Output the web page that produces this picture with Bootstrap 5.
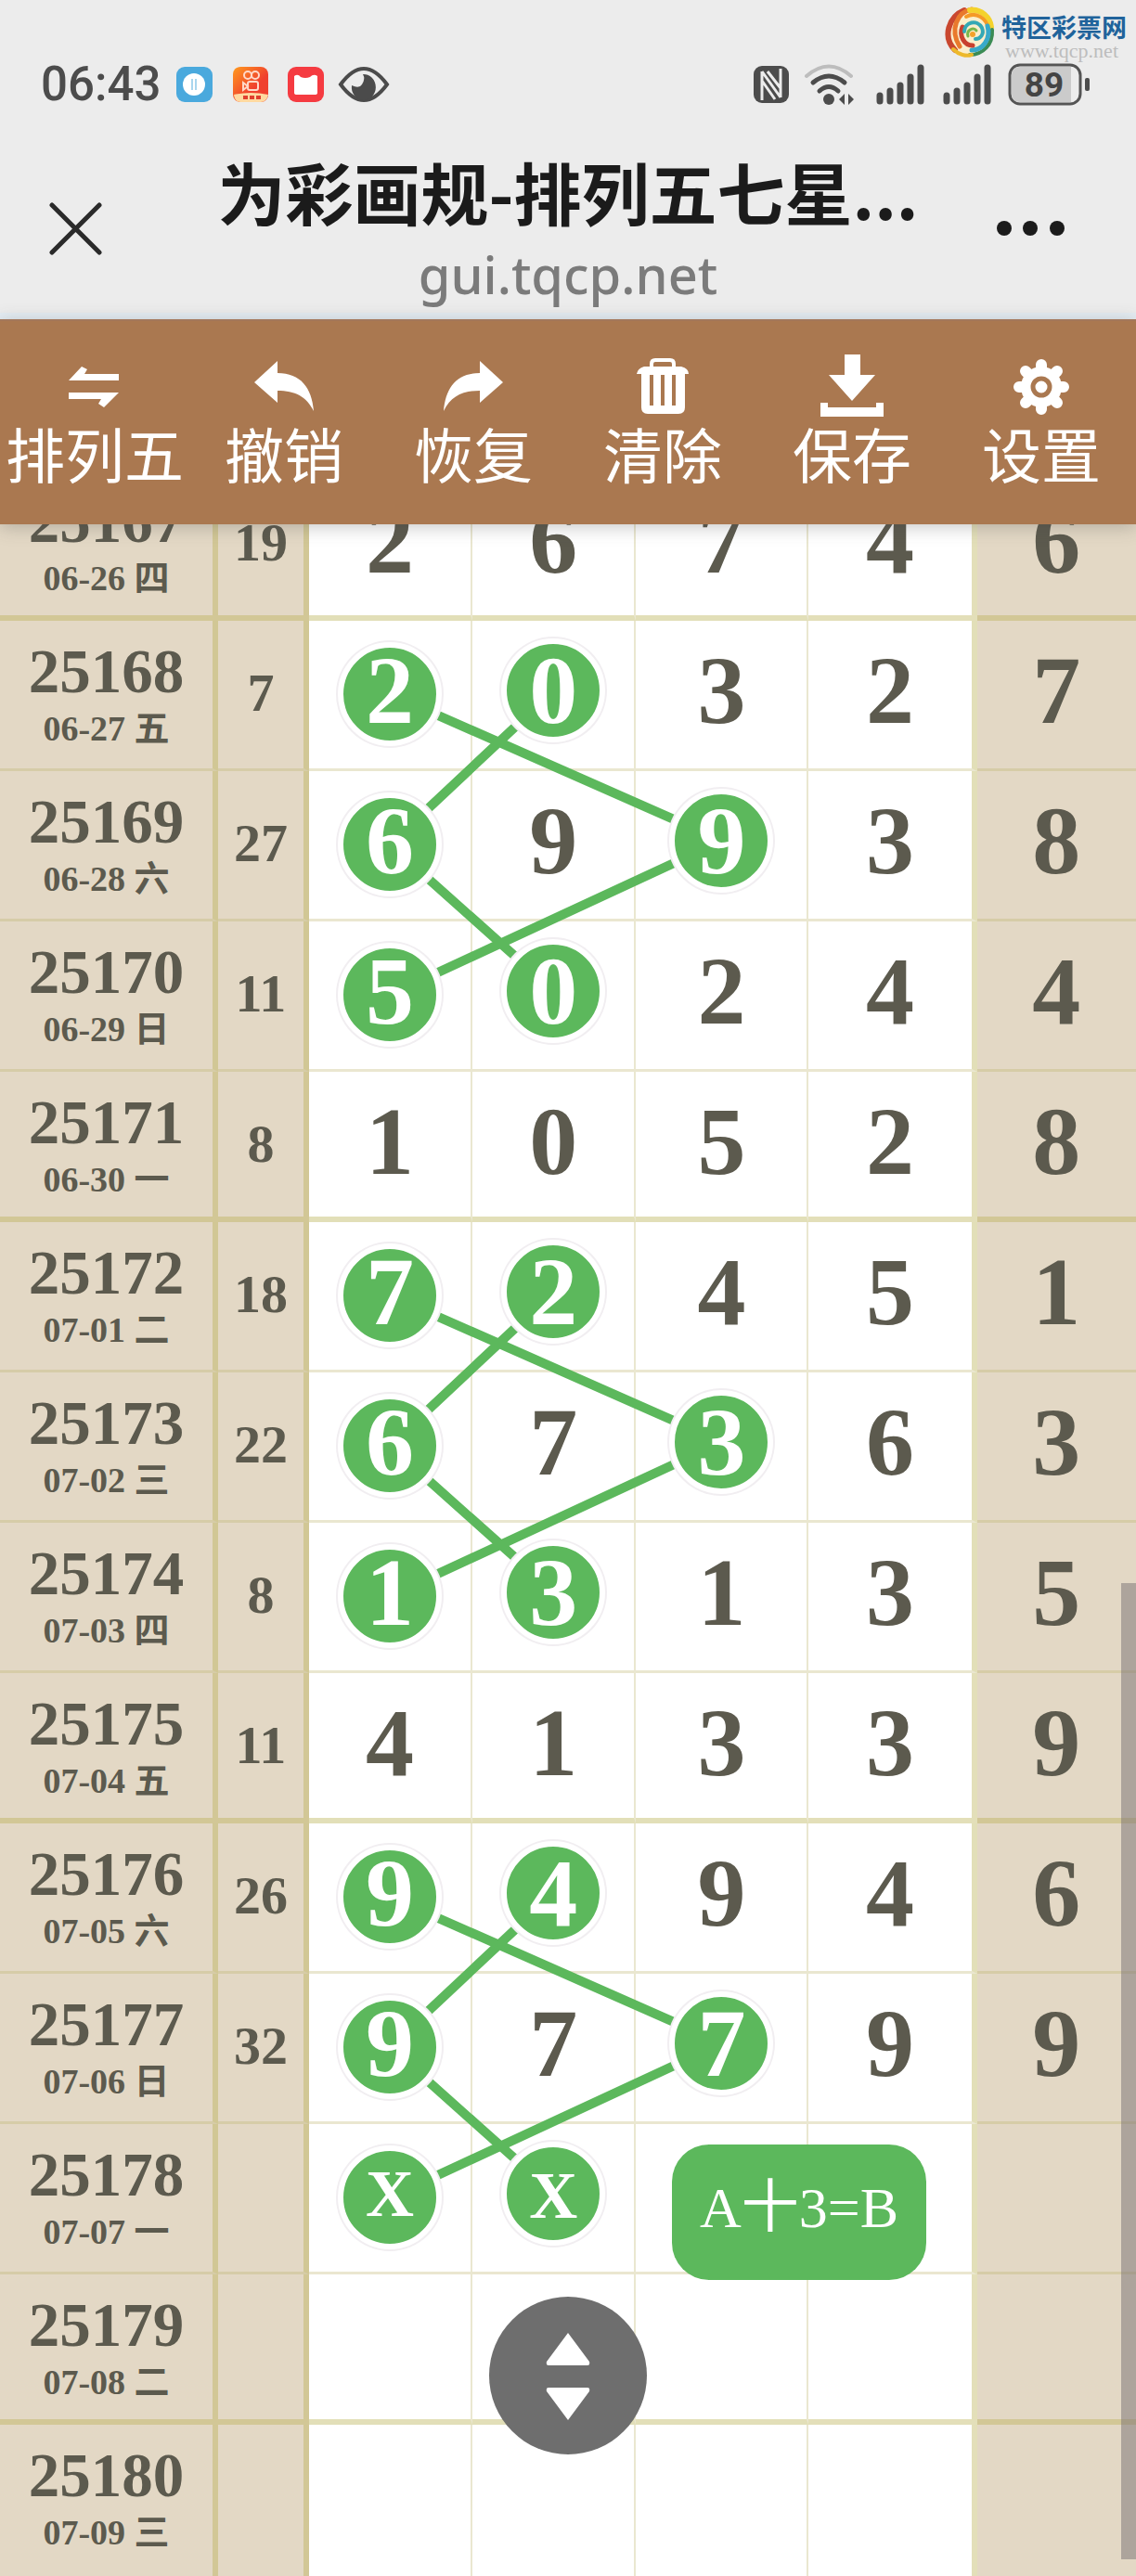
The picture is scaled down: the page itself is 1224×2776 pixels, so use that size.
<!DOCTYPE html>
<html lang="zh-CN">
<head>
<meta charset="utf-8">
<meta name="viewport" content="width=device-width, initial-scale=1">
<title>为彩画规-排列五七星</title>
<link href="https://cdn.jsdelivr.net/npm/bootstrap@5.3.0/dist/css/bootstrap.min.css" rel="stylesheet">
<style>
:root{--ink:#5c5a4e;--sand:#e3d8c5;--rule:rgba(184,176,80,.4);--rule-thin:rgba(184,176,100,.3);--leaf:#5cb85c}
body{background:var(--sand);font-family:"Noto Sans","Noto Sans CJK SC",sans-serif;color:var(--ink);overflow-x:hidden}
svg{display:block;flex:none}
.top-shell{background:#ececec;border-bottom:7px solid #e5edf3}
.status-line{padding:63px 50px 44px 44px;color:#4c4c4c}
.status-group{height:56px}
.clock{font:500 51px/56px Roboto,sans-serif}
.brand-mark{top:6px;right:10px;gap:6px}
.brand-name{font:bold 27px/30px "Noto Sans CJK SC",sans-serif;color:#20639b}
.brand-url{font:22px/22px "Liberation Serif",serif;color:#bdbdbd;padding-left:4px}
.title-line{padding:0 46px}
.page-title{font:bold 73px/84px "Noto Sans CJK SC",sans-serif;color:#1b1b1b;margin:0 0 6px}
.page-host{font:500 56px/84px "Noto Sans",sans-serif;color:#7b7b7b}
.plain-btn{background:none;border:0;padding:0;color:#1b1b1b}
.tools{background:#aa7850;height:221px;z-index:5;box-shadow:0 3px 18px rgba(70,70,70,.3);border-top:2px solid #a3775a}
.tools button{background:none;border:0;padding:30px 0 0;color:#fff;font:64px/62px "Noto Sans CJK SC",sans-serif;flex:1 1 0;min-width:0;white-space:nowrap}
.chart{margin-top:-58px}
.chart-table{table-layout:fixed;border-collapse:separate;border-spacing:0;font-family:"Liberation Serif","Noto Sans CJK SC",serif;font-weight:bold}
.chart-table>tbody>tr>*{height:162px;padding:0;text-align:center;vertical-align:top;color:var(--ink);background:#fff;border:0 solid var(--rule-thin);border-width:0 2px 3px 0;font-size:104px;line-height:150px}
.chart-table>tbody>tr>th{background:var(--sand);border-right:6px solid var(--rule);padding-top:24px;font-size:67px;line-height:60px}
.chart-table>tbody>tr>th small{display:block;font-size:38px;line-height:64px;font-weight:bold}
.chart-table>tbody>tr>td:nth-child(2){background:var(--sand);border-right:6px solid var(--rule);font-size:58px;line-height:156px}
.chart-table>tbody>tr>td:nth-child(6){border-right:6px solid var(--rule)}
.chart-table>tbody>tr>td:nth-child(7){background:var(--sand);border-right:0}
.chart-table>tbody>tr.block-end>*{border-bottom:6px solid var(--rule)}
.chart-table>tbody>tr:last-child>*{border-bottom:0;height:163px}
.ball{display:block;position:relative;z-index:2;width:112px;height:112px;margin:19px auto 0;border:6px solid #fff;border-radius:50%;background:var(--leaf);box-shadow:0 0 0 2px #f1eef1;color:#fff;line-height:100px}
td:nth-child(3) .ball{margin-top:23px;line-height:92px}
.chart-table .ball-x{font-size:72px;line-height:104px}
.links{inset:0;z-index:1;pointer-events:none}
.formula{left:59.15%;top:1804px;z-index:3;background:var(--leaf);color:#fff;border-radius:40px;padding:28px 30px 38px;font:62px/80px "Liberation Serif","Noto Sans CJK SC",serif}
.jump{left:50%;top:1968px;z-index:3;transform:translateX(-50%)}
.thumb{right:0;top:1199px;width:16px;height:1052px;background:rgba(120,112,116,.5);z-index:4}
</style>
<script src="https://cdn.jsdelivr.net/npm/bootstrap@5.3.0/dist/js/bootstrap.bundle.min.js"></script>
</head>
<body>
<header class="top-shell position-relative">
  <a href="#" class="brand-mark position-absolute d-flex text-decoration-none">
    <svg width="56" height="58" viewBox="0 0 56 58" fill="none" stroke-linecap="round">
      <circle cx="28" cy="29" r="25" fill="#fbeecb"/>
      <path d="M22 5C5 12-2 34 12 48" stroke="#c9472f" stroke-width="6"/>
      <path d="M30 4C14 7 6 26 17 44" stroke="#e9792c" stroke-width="5"/>
      <path d="M28 5c12-2 22 8 23 18" stroke="#f4d22c" stroke-width="6"/>
      <path d="M24 12c11-6 22 2 24 13" stroke="#f59a26" stroke-width="4"/>
      <path d="M52 26c1 16-10 27-24 27" stroke="#3b8b54" stroke-width="4"/>
      <path d="M47 22c4 14-5 26-17 26" stroke="#38a9c9" stroke-width="5"/>
      <path d="M10 47c6 6 14 8 20 6" stroke="#edb92b" stroke-width="4"/>
      <path d="M20 23c-4 10 2 20 11 20" stroke="#c8402f" stroke-width="5"/>
      <path d="M22 28c0-10 14-14 19-4 3 7-2 12-7 12" stroke="#34a8b5" stroke-width="4"/>
      <path d="M26 33c-2-7 6-10 9-6" stroke="#78b64a" stroke-width="3"/>
      <circle cx="31" cy="31" r="3" fill="#f3a12a"/>
    </svg>
    <span class="d-block pt-2"><span class="brand-name d-block">特区彩票网</span><span class="brand-url d-block">www.tqcp.net</span></span>
  </a>
  <div class="status-line d-flex justify-content-between">
    <div class="status-group d-flex align-items-center">
      <span class="clock me-3">06:43</span>
      <svg width="240" height="40" viewBox="0 0 240 40">
        <rect x="1" y="1" width="39" height="38" rx="9" fill="#4aa9dd"/><ellipse cx="20" cy="20" rx="12" ry="12" fill="#fff"/><path d="M18 14v12M22 14v12" stroke="#a9d6ee" stroke-width="2"/>
        <defs><linearGradient id="sun" x1="0" y1="0" x2="1" y2="1"><stop offset="0" stop-color="#ff9a1e"/><stop offset=".6" stop-color="#f0402e"/></linearGradient></defs>
        <rect x="62" y="1" width="38" height="38" rx="8" fill="url(#sun)"/><g fill="none" stroke="#ffd9c8" stroke-width="2"><circle cx="78" cy="10" r="4"/><circle cx="86" cy="10" r="4"/><rect x="78" y="17" width="11" height="9" rx="2"/><path d="M73 18v8l5-4z"/></g><path d="M63 31q18-4 37 0-2 8-8 8H70q-6 0-7-8" fill="#ffd9a0"/><path d="M73 34h20" stroke="#e0402f" stroke-width="4" stroke-dasharray="5 2"/>
        <rect x="121" y="1" width="39" height="38" rx="9" fill="#f53b41"/><path d="M128 11q4-3 7 1 5 2 10 0 4-4 8-1v18q0 2-3 2h-19q-3 0-3-2z" fill="#fff"/>
        <path d="M178 20Q203-14 228 20 203 54 178 20Z" stroke="#4b4b4b" stroke-width="4" fill="#ececec"/><path d="M202 9a13 14 0 1 1-12 12q8 4 11-1 4-6 1-11z" fill="#4b4b4b"/>
      </svg>
    </div>
    <div class="status-group d-flex align-items-center">
      <svg class="me-3" width="38" height="40" viewBox="0 0 38 40"><rect width="38" height="40" rx="9" fill="#4c4c4c"/><path d="M9 37V6M29 34V3M9 6l20 28M15 6l14 18M9 16l14 20" fill="none" stroke="#ececec" stroke-width="3"/></svg>
      <svg class="me-3" width="60" height="44" viewBox="0 0 60 44" fill="none" stroke-linecap="round" stroke-width="5"><path d="M3 13Q27-8 51 13" stroke="#bdbdbd" stroke-width="4"/><path d="M10 20q17-14 34 0M17 29q10-9 20 0" stroke="#4c4c4c"/><circle cx="27" cy="38" r="6" fill="#4c4c4c"/><path d="M38 38l6-6v12zm16 0l-6-6v12z" fill="#4c4c4c"/></svg>
      <svg class="me-3" width="56" height="44" viewBox="0 0 56 44" stroke="#4c4c4c" stroke-width="7" stroke-linecap="round"><path d="M6 34v6M17 29v11M28 23v17M39 14v26M50 4v36"/></svg>
      <svg class="me-3" width="56" height="44" viewBox="0 0 56 44" stroke="#4c4c4c" stroke-width="7" stroke-linecap="round"><path d="M6 34v6M17 29v11M28 23v17M39 14v26M50 4v36"/></svg>
      <svg width="88" height="46" viewBox="0 0 88 46"><rect x="2" y="2" width="76" height="42" rx="11" fill="#ececec" stroke="#555" stroke-width="3"/><path d="M13 4h55v38H13q-9 0-9-9V13q0-9 9-9" fill="#cbcbcb"/><rect x="83" y="16" width="5" height="14" rx="2" fill="#4c4c4c"/><text x="39" y="36" text-anchor="middle" font-family="Roboto" font-weight="bold" font-size="37" fill="#444">89</text></svg>
    </div>
  </div>
  <div class="title-line d-flex justify-content-between align-items-center">
    <button class="plain-btn" type="button" aria-label="关闭"><svg width="105" height="70" viewBox="0 0 105 70"><path d="M10 6l51 51M61 6L10 57" stroke="#2a2a2a" stroke-width="5" stroke-linecap="round"/></svg></button>
    <div class="text-center">
      <h1 class="page-title">为彩画规-排列五七星...</h1>
      <div class="page-host">gui.tqcp.net</div>
    </div>
    <button class="plain-btn" type="button" aria-label="更多"><svg width="105" height="70" viewBox="0 0 105 70" fill="#1b1b1b"><circle cx="9" cy="31" r="8"/><circle cx="37" cy="31" r="8"/><circle cx="66" cy="31" r="8"/></svg></button>
  </div>
</header>

<nav class="tools d-flex position-relative">
  <button class="d-flex flex-column align-items-center justify-content-start" type="button"><svg width="80" height="80" viewBox="0 0 80 80" fill="#fff"><path d="M12 34L26 19l6 3-3 5h37v7zM66 47H12v7h35l-3 5 6 4z"/></svg>排列五</button>
  <button class="d-flex flex-column align-items-center justify-content-start" type="button"><svg width="80" height="80" viewBox="0 0 80 80" fill="#fff"><path d="M8 36L33 13v13c25 0 37 16 39 41-8-16-20-22-39-22v13z"/></svg>撤销</button>
  <button class="d-flex flex-column align-items-center justify-content-start" type="button"><svg width="80" height="80" viewBox="0 0 80 80" fill="#fff"><path d="M72 36L47 13v13C22 26 10 42 8 67c8-16 20-22 39-22v13z"/></svg>恢复</button>
  <button class="d-flex flex-column align-items-center justify-content-start" type="button"><svg width="80" height="80" viewBox="0 0 80 80" fill="none" stroke="#fff"><path d="M28 22v-6q0-4 4-4h16q4 0 4 4v6" stroke-width="4"/><path d="M20 19h40q8 2 8 8h-4v36q0 7-7 7H24q-7 0-7-7V27h-5q1-6 8-8z" fill="#fff" stroke="none"/><path d="M28 28v33M40 28v33M52 28v33" stroke="#aa7850" stroke-width="4"/></svg>清除</button>
  <button class="d-flex flex-column align-items-center justify-content-start" type="button"><svg width="80" height="80" viewBox="0 0 80 80" fill="#fff"><path d="M32 6h17v22h16L40 56 15 28h17zM6 58h8v5h52v-5h8v15H6z"/></svg>保存</button>
  <button class="d-flex flex-column align-items-center justify-content-start" type="button"><svg width="80" height="80" viewBox="0 0 80 80"><g stroke="#fff" stroke-width="12" stroke-linecap="round"><path d="M40 17v48M16 41h48M23 24l34 34M57 24L23 58"/></g><circle cx="40" cy="41" r="22" fill="#fff"/><circle cx="40" cy="41" r="9" fill="#fff" stroke="#aa7850" stroke-width="5"/></svg>设置</button>
</nav>

<main class="chart position-relative">
  <table class="chart-table w-100">
    <colgroup><col style="width:19.2%"><col style="width:8%"><col style="width:14.4%"><col style="width:14.4%"><col style="width:15.2%"><col style="width:14.8%"><col style="width:14%"></colgroup>
    <tbody>
      <tr class="block-end"><th scope="row">25167<small>06-26 四</small></th><td>19</td><td>2</td><td>6</td><td>7</td><td>4</td><td>6</td></tr>
      <tr><th scope="row">25168<small>06-27 五</small></th><td>7</td><td><span class="ball">2</span></td><td><span class="ball">0</span></td><td>3</td><td>2</td><td>7</td></tr>
      <tr><th scope="row">25169<small>06-28 六</small></th><td>27</td><td><span class="ball">6</span></td><td>9</td><td><span class="ball">9</span></td><td>3</td><td>8</td></tr>
      <tr><th scope="row">25170<small>06-29 日</small></th><td>11</td><td><span class="ball">5</span></td><td><span class="ball">0</span></td><td>2</td><td>4</td><td>4</td></tr>
      <tr class="block-end"><th scope="row">25171<small>06-30 一</small></th><td>8</td><td>1</td><td>0</td><td>5</td><td>2</td><td>8</td></tr>
      <tr><th scope="row">25172<small>07-01 二</small></th><td>18</td><td><span class="ball">7</span></td><td><span class="ball">2</span></td><td>4</td><td>5</td><td>1</td></tr>
      <tr><th scope="row">25173<small>07-02 三</small></th><td>22</td><td><span class="ball">6</span></td><td>7</td><td><span class="ball">3</span></td><td>6</td><td>3</td></tr>
      <tr><th scope="row">25174<small>07-03 四</small></th><td>8</td><td><span class="ball">1</span></td><td><span class="ball">3</span></td><td>1</td><td>3</td><td>5</td></tr>
      <tr class="block-end"><th scope="row">25175<small>07-04 五</small></th><td>11</td><td>4</td><td>1</td><td>3</td><td>3</td><td>9</td></tr>
      <tr><th scope="row">25176<small>07-05 六</small></th><td>26</td><td><span class="ball">9</span></td><td><span class="ball">4</span></td><td>9</td><td>4</td><td>6</td></tr>
      <tr><th scope="row">25177<small>07-06 日</small></th><td>32</td><td><span class="ball">9</span></td><td>7</td><td><span class="ball">7</span></td><td>9</td><td>9</td></tr>
      <tr><th scope="row">25178<small>07-07 一</small></th><td></td><td><span class="ball ball-x">X</span></td><td><span class="ball ball-x">X</span></td><td></td><td></td><td></td></tr>
      <tr class="block-end"><th scope="row">25179<small>07-08 二</small></th><td></td><td></td><td></td><td></td><td></td><td></td></tr>
      <tr><th scope="row">25180<small>07-09 三</small></th><td></td><td></td><td></td><td></td><td></td><td></td></tr>
    </tbody>
  </table>
  <svg class="links position-absolute w-100 h-100" viewBox="0 0 1224 2269" preserveAspectRatio="none" fill="none" stroke="#5cb85c" stroke-width="10">
    <path d="M420 241L778 399 420 565M597 237L420 403 597 561"/>
    <path d="M420 889L778 1047 420 1213M597 885L420 1051 597 1209"/>
    <path d="M420 1537L778 1695 420 1861M597 1533L420 1699 597 1857"/>
  </svg>
  <div class="formula position-absolute">A十3=B</div>
  <button class="plain-btn jump position-absolute" type="button" aria-label="滚动"><svg width="170" height="170" viewBox="0 0 170 170"><circle cx="85" cy="85" r="85" fill="#6e6e6e"/><path d="M85 39l23 31q1 4-2 4H64q-3 0-2-4zM85 133l23-31q1-4-2-4H64q-3 0-2 4z" fill="#fff"/></svg></button>
  <div class="thumb position-absolute"></div>
</main>
</body>
</html>
